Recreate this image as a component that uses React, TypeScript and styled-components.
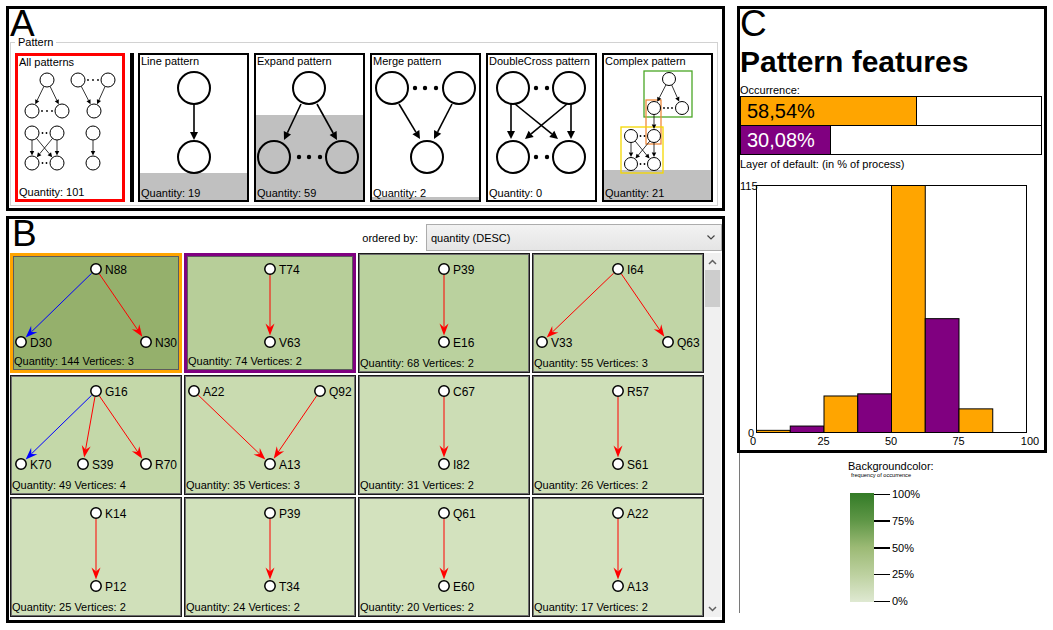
import React from "react"
import styled, { createGlobalStyle } from "styled-components"

const GlobalStyle = createGlobalStyle`
  html, body {
    margin: 0;
    padding: 0;
    background: #ffffff;
  }
  body {
    font-family: "Liberation Sans", Arial, sans-serif;
    color: #000000;
  }
  *, *::before, *::after {
    box-sizing: border-box;
  }
`

/* ---------- drawing helpers ---------- */

type XY = [number, number]

const unit = (x1: number, y1: number, x2: number, y2: number) => {
  const d = Math.hypot(x2 - x1, y2 - y1) || 1
  return { ux: (x2 - x1) / d, uy: (y2 - y1) / d }
}

interface ArrowProps {
  x1: number
  y1: number
  x2: number
  y2: number
  color?: string
  width?: number
  len: number
  wid: number
  notch?: number
}

const Arrow = ({ x1, y1, x2, y2, color = "#000", width = 1, len, wid, notch = 0 }: ArrowProps) => {
  const { ux, uy } = unit(x1, y1, x2, y2)
  const nx = -uy
  const ny = ux
  const bx = x2 - ux * len
  const by = y2 - uy * len
  const mx = x2 - ux * (len - notch)
  const my = y2 - uy * (len - notch)
  const pts = [
    [x2, y2],
    [bx + (nx * wid) / 2, by + (ny * wid) / 2],
    [mx, my],
    [bx - (nx * wid) / 2, by - (ny * wid) / 2],
  ]
    .map((p) => p.map((v) => v.toFixed(2)).join(","))
    .join(" ")
  return (
    <g>
      <line x1={x1} y1={y1} x2={mx} y2={my} stroke={color} strokeWidth={width} />
      <polygon points={pts} fill={color} />
    </g>
  )
}

// arrow between two circles, trimmed at their rims
const Link = ({ a, b, ra, rb, ...rest }: { a: XY; b: XY; ra: number; rb: number } & Omit<ArrowProps, "x1" | "y1" | "x2" | "y2">) => {
  const { ux, uy } = unit(a[0], a[1], b[0], b[1])
  return <Arrow x1={a[0] + ux * ra} y1={a[1] + uy * ra} x2={b[0] - ux * rb} y2={b[1] - uy * rb} {...rest} />
}

/* ---------- pattern glyphs (panel A) ---------- */

type Glyph = {
  r: number
  stroke: number
  head: [number, number]
  nodes: XY[]
  links?: [number, number][]
  arrows?: [number, number, number, number][]
  dots?: XY[]
  dotR?: number
  boxes?: { x: number; y: number; w: number; h: number; color: string }[]
}

const GlyphDrawing = ({ glyph, w, h }: { glyph: Glyph; w: number; h: number }) => (
  <GlyphSvg width={w} height={h} viewBox={`0 13 ${w} ${h}`}>
    {glyph.boxes?.map((b, i) => (
      <rect key={i} x={b.x} y={b.y} width={b.w} height={b.h} fill="none" stroke={b.color} strokeWidth={1.3} />
    ))}
    {glyph.links?.map(([a, b], i) => (
      <Link
        key={i}
        a={glyph.nodes[a]}
        b={glyph.nodes[b]}
        ra={glyph.r}
        rb={glyph.r + 0.5}
        width={glyph.stroke * 0.8}
        len={glyph.head[0]}
        wid={glyph.head[1]}
      />
    ))}
    {glyph.arrows?.map(([x1, y1, x2, y2], i) => (
      <Arrow key={i} x1={x1} y1={y1} x2={x2} y2={y2} width={glyph.stroke * 0.8} len={glyph.head[0]} wid={glyph.head[1]} />
    ))}
    {glyph.nodes.map(([x, y], i) => (
      <circle key={i} cx={x} cy={y} r={glyph.r} fill="none" stroke="#000" strokeWidth={glyph.stroke} />
    ))}
    {glyph.dots?.map(([x, y], i) => (
      <circle key={i} cx={x} cy={y} r={glyph.dotR ?? 2.2} fill="#000" />
    ))}
  </GlyphSvg>
)

const allPatterns: Glyph = {
  r: 7,
  stroke: 1,
  head: [4.5, 4.5],
  dotR: 0.9,
  nodes: [
    [29, 24], [14, 55], [44, 55],
    [60, 24], [90, 24], [76, 55],
    [14, 77], [39, 77], [14, 107], [39, 107],
    [75, 77], [75, 107],
  ],
  links: [
    [0, 1], [0, 2], [3, 5], [4, 5],
    [6, 8], [7, 9], [6, 9], [7, 8],
    [10, 11],
  ],
  dots: [
    [24, 55], [29, 55], [34, 55],
    [70, 24], [75, 24], [80, 24],
    [24.5, 77], [28.5, 77], [24.5, 107], [28.5, 107],
  ],
}

const patternCards: { title: string; qty: number; glyph: Glyph }[] = [
  {
    title: "Line pattern",
    qty: 19,
    glyph: { r: 16, stroke: 2, head: [8, 8], nodes: [[54, 33], [54, 102]], arrows: [[54, 49, 54, 85]] },
  },
  {
    title: "Expand pattern",
    qty: 59,
    glyph: {
      r: 16,
      stroke: 2,
      head: [8, 8],
      nodes: [[53, 33], [18, 102], [86, 102]],
      arrows: [[45, 49, 28, 85], [61, 49, 81, 85]],
      dots: [[43, 102], [53, 102], [64, 102]],
    },
  },
  {
    title: "Merge pattern",
    qty: 2,
    glyph: {
      r: 16,
      stroke: 2,
      head: [8, 8],
      nodes: [[20, 33], [87, 33], [55, 102]],
      arrows: [[27, 49, 48, 84], [80, 49, 62, 84]],
      dots: [[43, 33], [53, 33], [64, 33]],
    },
  },
  {
    title: "DoubleCross pattern",
    qty: 0,
    glyph: {
      r: 16,
      stroke: 2,
      head: [8, 8],
      nodes: [[25, 33], [81, 33], [25, 102], [81, 102]],
      arrows: [[23, 49, 23, 84], [83, 49, 83, 84], [27, 49, 70, 84], [79, 49, 37, 84]],
      dots: [[48, 33], [59, 33], [48, 102], [59, 102]],
    },
  },
  {
    title: "Complex pattern",
    qty: 21,
    glyph: {
      r: 6.5,
      stroke: 1,
      head: [4.5, 4.5],
      dotR: 0.9,
      nodes: [[65, 24], [50, 53], [78, 53], [27, 81], [50, 81], [27, 109], [50, 109]],
      links: [[0, 1], [0, 2], [1, 4], [3, 5], [4, 6], [3, 6], [4, 5]],
      dots: [[60, 53], [64, 53], [68, 53], [36.5, 81], [40.5, 81], [36.5, 109], [40.5, 109]],
      boxes: [
        { x: 40, y: 16, w: 48, h: 46, color: "#4aa726" },
        { x: 42, y: 45, w: 15, h: 44, color: "#f08a3c" },
        { x: 17, y: 72, w: 42, h: 46, color: "#f5d800" },
      ],
    },
  },
]

const TOTAL = 101

/* ---------- graph tiles (panel B) ---------- */

type TileData = {
  qty: number
  bg: string
  sel?: string
  nodes: { label: string; x: number; y: number }[]
  edges: [number, number, string][]
}

const RED = "#ff0000"
const BLUE = "#0000ff"

const line = (a: string, b: string): Omit<TileData, "qty" | "bg"> => ({
  nodes: [
    { label: a, x: 86, y: 16 },
    { label: b, x: 86, y: 89 },
  ],
  edges: [[0, 1, RED]],
})

const tiles: TileData[] = [
  {
    qty: 144,
    bg: "#95b06c",
    sel: "#ffa500",
    nodes: [
      { label: "N88", x: 86, y: 16 },
      { label: "D30", x: 11, y: 89 },
      { label: "N30", x: 136, y: 89 },
    ],
    edges: [[0, 1, BLUE], [0, 2, RED]],
  },
  { qty: 74, bg: "#b7ce99", sel: "#800080", ...line("T74", "V63") },
  { qty: 68, bg: "#bad19e", ...line("P39", "E16") },
  {
    qty: 55,
    bg: "#c1d5a6",
    nodes: [
      { label: "I64", x: 86, y: 16 },
      { label: "V33", x: 10, y: 89 },
      { label: "Q63", x: 136, y: 89 },
    ],
    edges: [[0, 1, RED], [0, 2, RED]],
  },
  {
    qty: 49,
    bg: "#c4d8a9",
    nodes: [
      { label: "G16", x: 86, y: 16 },
      { label: "K70", x: 11, y: 89 },
      { label: "S39", x: 73, y: 89 },
      { label: "R70", x: 136, y: 89 },
    ],
    edges: [[0, 1, BLUE], [0, 2, RED], [0, 3, RED]],
  },
  {
    qty: 35,
    bg: "#c9dbb0",
    nodes: [
      { label: "A22", x: 10, y: 16 },
      { label: "Q92", x: 136, y: 16 },
      { label: "A13", x: 86, y: 89 },
    ],
    edges: [[0, 2, RED], [1, 2, RED]],
  },
  { qty: 31, bg: "#ccddb5", ...line("C67", "I82") },
  { qty: 26, bg: "#cfdfb8", ...line("R57", "S61") },
  { qty: 25, bg: "#d0e0ba", ...line("K14", "P12") },
  { qty: 24, bg: "#d1e1bb", ...line("P39", "T34") },
  { qty: 20, bg: "#d3e2be", ...line("Q61", "E60") },
  { qty: 17, bg: "#d4e3c0", ...line("A22", "A13") },
]

const TILE_W = 172
const TILE_H = 120

const TileGraph = ({ tile, inset }: { tile: TileData; inset: number }) => {
  const w = TILE_W - 2 * inset
  const h = 105 - 2 * inset
  return (
    <TileSvg width={w} height={h} viewBox={`${inset} ${inset} ${w} ${h}`}>
      {tile.edges.map(([a, b, color], i) => {
        const na = tile.nodes[a]
        const nb = tile.nodes[b]
        return (
          <Link key={i} a={[na.x, na.y]} b={[nb.x, nb.y]} ra={6} rb={6.5} color={color} width={1} len={12} wid={9} notch={4} />
        )
      })}
      {tile.nodes.map((n, i) => (
        <g key={i}>
          <circle cx={n.x} cy={n.y} r={5.2} fill="#ffffff" stroke="#000" strokeWidth={1.5} />
          <NodeLabel x={n.x + 9} y={n.y + 4.5}>
            {n.label}
          </NodeLabel>
        </g>
      ))}
    </TileSvg>
  )
}

/* ---------- histogram (panel C) ---------- */

const bins = [1, 3, 17, 18, 115, 53, 11]
const PX0 = 16
const PX1 = 286
const PY0 = 14
const PY1 = 261

const Histogram = () => {
  const bw = (PX1 - PX0) / 8
  const sy = (PY1 - PY0) / 115
  return (
    <ChartSvg width={304} height={279} viewBox="0 0 304 279">
      <rect x={PX0 + 0.5} y={PY0 + 0.5} width={PX1 - PX0} height={PY1 - PY0} fill="#fff" stroke="#000" strokeWidth={1} />
      {bins.map((v, i) => {
        const h = v * sy
        return (
          <rect
            key={i}
            x={PX0 + i * bw + 0.5}
            y={PY1 - h + 0.5}
            width={bw}
            height={h}
            fill={i % 2 === 0 ? "#ffa500" : "#800080"}
            stroke="#000"
            strokeWidth={1}
          />
        )
      })}
      <AxisText x={0} y={19}>115</AxisText>
      <AxisText x={8} y={266}>0</AxisText>
      {[0, 25, 50, 75, 100].map((t) => (
        <AxisText key={t} x={PX0 + t * 2.7 + (t === 0 ? -3 : t === 100 ? 4 : 0)} y={274} textAnchor="middle">
          {t}
        </AxisText>
      ))}
    </ChartSvg>
  )
}

/* ---------- app ---------- */

const App = () => {
  return (
    <>
      <GlobalStyle />
      <Page>
        <LeftColumn>
          <Panel $height={205}>
            <PanelLetter $height={27} $indent={1}>A</PanelLetter>
            <PatternSet>
              <SetLegend>Pattern</SetLegend>
              <CardRow>
                <Card $fill={0} $accent="#ff0000">
                  <CardTitle>All patterns</CardTitle>
                  <GlyphDrawing glyph={allPatterns} w={104} h={117} />
                  <CardQty>Quantity: 101</CardQty>
                </Card>
                <Separator />
                {patternCards.map((c) => (
                  <Card key={c.title} $fill={(c.qty / TOTAL) * 145}>
                    <CardTitle>{c.title}</CardTitle>
                    <GlyphDrawing glyph={c.glyph} w={107} h={119} />
                    <CardQty>Quantity: {c.qty}</CardQty>
                  </Card>
                ))}
              </CardRow>
            </PatternSet>
          </Panel>

          <Panel $height={407}>
            <ListHeader>
              <PanelLetter $height={34} $indent={3}>B</PanelLetter>
              <SortControl>
                <SortLabel>ordered by:</SortLabel>
                <SortSelect>
                  <span>quantity (DESC)</span>
                  <svg width="8" height="5" viewBox="0 0 8 5">
                    <polyline points="0.5,0.5 4,4 7.5,0.5" fill="none" stroke="#444" strokeWidth="1.2" />
                  </svg>
                </SortSelect>
              </SortControl>
            </ListHeader>
            <ListBody>
              <TileGrid>
                {tiles.map((t, i) => (
                  <Tile key={i} $bg={t.bg} $sel={t.sel}>
                    <TileGraph tile={t} inset={t.sel ? 3 : 1} />
                    <TileCaption>
                      Quantity: {t.qty} Vertices: {t.nodes.length}
                    </TileCaption>
                  </Tile>
                ))}
              </TileGrid>
              <ScrollTrack>
                <ScrollButton>
                  <svg width="9" height="6" viewBox="0 0 9 6">
                    <polyline points="1,5 4.5,1.5 8,5" fill="none" stroke="#606060" strokeWidth="1.5" />
                  </svg>
                </ScrollButton>
                <ScrollThumb />
                <ScrollSpacer />
                <ScrollButton>
                  <svg width="9" height="6" viewBox="0 0 9 6">
                    <polyline points="1,1 4.5,4.5 8,1" fill="none" stroke="#606060" strokeWidth="1.5" />
                  </svg>
                </ScrollButton>
              </ScrollTrack>
            </ListBody>
          </Panel>
        </LeftColumn>

        <RightColumn>
          <Panel $height={447}>
            <PanelLetter $height={30} $indent={0}>C</PanelLetter>
            <FeatureTitle>Pattern features</FeatureTitle>
            <SmallText>Occurrence:</SmallText>
            <OccurrenceBar>
              <OccurrenceFill $color="#ffa500" $text="#000" $pct={58.54}>58,54%</OccurrenceFill>
            </OccurrenceBar>
            <OccurrenceBar>
              <OccurrenceFill $color="#800080" $text="#fff" $pct={30.08}>30,08%</OccurrenceFill>
            </OccurrenceBar>
            <LayerText>Layer of default: (in % of process)</LayerText>
            <Histogram />
          </Panel>
          <ColorLegend>
            <LegendTitle>Backgroundcolor:</LegendTitle>
            <LegendSub>frequency of occurrence</LegendSub>
            <ScaleRow>
              <GradientBar />
              <TickColumn>
                {[
                  ["100%", false],
                  ["75%", true],
                  ["50%", true],
                  ["25%", false],
                  ["0%", false],
                ].map(([label, thick]) => (
                  <TickRow key={label as string}>
                    <TickLine $thick={thick as boolean} />
                    <TickLabel>{label as string}</TickLabel>
                  </TickRow>
                ))}
              </TickColumn>
            </ScaleRow>
          </ColorLegend>
        </RightColumn>
      </Page>
    </>
  )
}

const Page = styled.div`
  display: flex;
  align-items: flex-start;
  gap: 12px;
  width: 1053px;
  height: 630px;
  padding: 6px 0 0 6px;
  overflow: hidden;
`
const LeftColumn = styled.div`
  display: flex;
  flex-direction: column;
  gap: 5px;
  width: 719px;
`
const RightColumn = styled.div`
  display: flex;
  flex-direction: column;
  width: 310px;
`
const Panel = styled.section<{ $height: number }>`
  display: flex;
  flex-direction: column;
  height: ${(p) => p.$height}px;
  border: 3px solid #000;
  background: #ffffff;
`
const PanelLetter = styled.div<{ $height: number; $indent: number }>`
  height: ${(p) => p.$height}px;
  padding-left: ${(p) => p.$indent}px;
  font-size: 37px;
  line-height: 30px;
  flex-shrink: 0;
`
const PatternSet = styled.fieldset`
  margin: 0 4px 0 1px;
  padding: 4px 4px 3px 4px;
  height: 170px;
  min-width: 0;
  border: 1px solid #d2d2d2;
`
const SetLegend = styled.legend`
  padding: 0 3px;
  font-size: 11px;
  line-height: 13px;
`
const CardRow = styled.div`
  display: flex;
  gap: 5px;
`
const Card = styled.div<{ $fill: number; $accent?: string }>`
  display: flex;
  flex-direction: column;
  width: ${(p) => (p.$accent ? 110 : 111)}px;
  height: 149px;
  border: ${(p) => (p.$accent ? `3px solid ${p.$accent}` : "2px solid #000")};
  background: linear-gradient(to top, #c0c0c0 ${(p) => p.$fill}px, #ffffff ${(p) => p.$fill}px);
`
const CardTitle = styled.div`
  font-size: 11px;
  line-height: 13px;
  padding-left: 1px;
  white-space: nowrap;
`
const CardQty = styled(CardTitle)`
  margin-top: auto;
`
const GlyphSvg = styled.svg`
  display: block;
  flex-shrink: 0;
`
const Separator = styled.div`
  width: 5px;
  height: 149px;
  margin-right: -1px;
  background: #000;
`
const ListHeader = styled.div`
  display: flex;
  justify-content: space-between;
  height: 34px;
`
const SortControl = styled.div`
  display: flex;
  align-items: center;
  gap: 8px;
  height: 27px;
  margin-top: 5px;
`
const SortLabel = styled.span`
  font-size: 11px;
`
const SortSelect = styled.div`
  display: flex;
  align-items: center;
  justify-content: space-between;
  width: 296px;
  height: 27px;
  padding: 0 6px 0 4px;
  border: 1px solid #acacac;
  background: linear-gradient(#f2f2f2, #e5e5e5);
  font-size: 11px;
`
const ListBody = styled.div`
  display: flex;
  padding-left: 1px;
`
const TileGrid = styled.div`
  display: grid;
  grid-template-columns: repeat(4, ${TILE_W}px);
  grid-auto-rows: ${TILE_H}px;
  gap: 2px;
`
const Tile = styled.div<{ $bg: string; $sel?: string }>`
  display: flex;
  flex-direction: column;
  background: ${(p) => p.$bg};
  border: ${(p) => (p.$sel ? `3px solid ${p.$sel}` : "1px solid #1a1a1a")};
  box-shadow: inset 0 0 0 1px ${(p) => (p.$sel ? "#5c5c5c" : "#6e6e6e")};
`
const TileSvg = styled.svg`
  display: block;
  flex-shrink: 0;
`
const NodeLabel = styled.text`
  font-family: "Liberation Sans", Arial, sans-serif;
  font-size: 12px;
  fill: #000;
`
const TileCaption = styled.div`
  font-size: 11px;
  line-height: 13px;
  padding-left: 1px;
  white-space: nowrap;
`
const ScrollTrack = styled.div`
  display: flex;
  flex-direction: column;
  align-items: center;
  width: 17px;
  height: 364px;
  background: #f0f0f0;
`
const ScrollButton = styled.div`
  display: flex;
  align-items: center;
  justify-content: center;
  width: 17px;
  height: 17px;
`
const ScrollThumb = styled.div`
  width: 15px;
  height: 37px;
  background: #cdcdcd;
`
const ScrollSpacer = styled.div`
  flex: 1;
`
const FeatureTitle = styled.div`
  font-size: 30px;
  font-weight: bold;
  line-height: 45px;
  height: 45px;
`
const SmallText = styled.div`
  font-size: 11px;
  line-height: 12px;
`
const OccurrenceBar = styled.div`
  display: flex;
  height: 30px;
  margin-right: 2px;
  border: 1px solid #000;
  & + & {
    margin-top: -1px;
  }
`
const OccurrenceFill = styled.div<{ $color: string; $text: string; $pct: number }>`
  width: ${(p) => p.$pct}%;
  padding-left: 6px;
  background: ${(p) => p.$color};
  color: ${(p) => p.$text};
  border-right: 1px solid #000;
  font-size: 20px;
  line-height: 28px;
  white-space: nowrap;
`
const LayerText = styled(SmallText)`
  margin-top: 2px;
  line-height: 14px;
`
const ChartSvg = styled.svg`
  display: block;
`
const AxisText = styled.text`
  font-family: "Liberation Sans", Arial, sans-serif;
  font-size: 11px;
  fill: #000;
`
const ColorLegend = styled.div`
  display: flex;
  flex-direction: column;
  height: 160px;
  margin-left: 2px;
  padding: 7px 0 0 108px;
  border-left: 1px solid #7a7a7a;
`
const LegendTitle = styled.div`
  font-size: 11px;
  line-height: 12px;
`
const LegendSub = styled.div`
  margin-left: 3px;
  font-size: 5.6px;
  line-height: 7px;
  white-space: nowrap;
`
const ScaleRow = styled.div`
  display: flex;
  margin-top: 14px;
  margin-left: 2px;
`
const GradientBar = styled.div`
  width: 24px;
  height: 109px;
  background: linear-gradient(to bottom, #337b27 0%, #5e9646 25%, #9cba75 50%, #bdd1a0 75%, #dfe9d2 100%);
`
const TickColumn = styled.div`
  display: flex;
  flex-direction: column;
  justify-content: space-between;
  height: 109px;
`
const TickRow = styled.div`
  display: flex;
  align-items: center;
  height: 2px;
`
const TickLine = styled.div<{ $thick: boolean }>`
  width: 16px;
  height: ${(p) => (p.$thick ? 2 : 1)}px;
  background: #000;
`
const TickLabel = styled.span`
  margin-left: 2px;
  font-size: 11px;
  line-height: 12px;
`

export default App
